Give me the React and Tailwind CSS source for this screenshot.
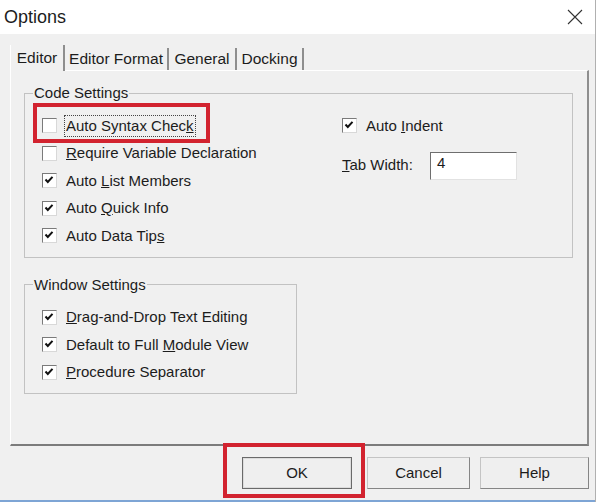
import React from 'react';

function CheckBox({ checked }) {
  return (
    <span className="relative w-[15px] h-[15px] shrink-0 bg-white border border-t-[#7a7a7a] border-l-[#7a7a7a] border-r-[#d8d8d8] border-b-[#d8d8d8]">
      {checked && (
        <svg className="absolute left-0 top-0" width="13" height="13" viewBox="0 0 13 13">
          <path d="M2.5 5.5 L4.8 8 L9.5 2.8" fill="none" stroke="#111" strokeWidth="2" />
        </svg>
      )}
    </span>
  );
}

function Row({ checked, children, focused }) {
  return (
    <div className="flex items-center h-[27.5px]">
      <CheckBox checked={checked} />
      {focused ? (
        <span className="ml-[8px] px-[1px] leading-[20px] outline-1 outline-dotted outline-[#444]">{children}</span>
      ) : (
        <span className="ml-[9px]">{children}</span>
      )}
    </div>
  );
}

function Tab({ label, width, selected }) {
  if (selected) {
    return (
      <div className={`${width} h-[26px] flex items-center justify-center border-l border-white border-r-2 border-r-[#8e8e8e] pb-[1px] bg-[#f0f0f0] relative z-10 -mb-[1px]`}>
        {label}
      </div>
    );
  }
  return (
    <div className={`${width} h-[22px] flex items-center justify-center border-r-2 border-r-[#8e8e8e]`}>
      {label}
    </div>
  );
}

export default function App() {
  return (
    <div className="relative flex w-[600px] h-[502px] overflow-hidden bg-white text-[#1c1c1c] font-['Liberation_Sans',Arial,sans-serif]">
      <div className="w-[595px] flex flex-col bg-[#f0f0f0]">
        {/* title bar */}
        <div className="h-[34px] bg-white flex items-center justify-between pl-[4px] pr-[12px]">
          <span className="text-[18px] leading-none">Options</span>
          <svg width="16" height="16" viewBox="0 0 16 16">
            <path d="M1 1 L15 15 M15 1 L1 15" stroke="#333" strokeWidth="1.1" />
          </svg>
        </div>

        {/* tabs */}
        <div className="pt-[10px] pl-[10px]">
          <div className="flex items-end h-[26px] text-[15.5px]">
            <Tab label="Editor" width="w-[55px]" selected />
            <Tab label="Editor Format" width="w-[104px]" />
            <Tab label="General" width="w-[68px]" />
            <Tab label="Docking" width="w-[67px]" />
          </div>

          <div className="w-[579px] h-[376px] border-t border-l border-white border-r-2 border-b-2 border-r-[#8e8e8e] border-b-[#7c7c7c] pt-[13px] pl-[13px] text-[15px]">
            <fieldset className="w-[549px] border border-[#c2c2c2]">
              <legend className="ml-[8px] px-[1px] leading-[18px]">Code Settings</legend>
              <div className="flex pt-[10px] pb-[7px] pl-[17px]">
                <div className="w-[300px]">
                  <Row focused>Auto Syntax Chec<u>k</u></Row>
                  <Row><u>R</u>equire Variable Declaration</Row>
                  <Row checked>Auto <u>L</u>ist Members</Row>
                  <Row checked>Auto <u>Q</u>uick Info</Row>
                  <Row checked>Auto Data Tip<u>s</u></Row>
                </div>
                <div>
                  <Row checked>Auto <u>I</u>ndent</Row>
                  <div className="flex items-center mt-[12px]">
                    <span className="w-[88px]"><u>T</u>ab Width:</span>
                    <div className="w-[87px] h-[28px] bg-white border border-t-[#6e6e6e] border-l-[#6e6e6e] border-r-[#e2e2e2] border-b-[#e2e2e2] pl-[6px] pb-[4px] flex items-center">
                      4
                    </div>
                  </div>
                </div>
              </div>
            </fieldset>

            <fieldset className="mt-[18px] w-[273px] border border-[#c2c2c2]">
              <legend className="ml-[8px] px-[1px] leading-[18px]">Window Settings</legend>
              <div className="pt-[10px] pb-[7px] pl-[17px]">
                <Row checked><u>D</u>rag-and-Drop Text Editing</Row>
                <Row checked>Default to Full <u>M</u>odule View</Row>
                <Row checked><u>P</u>rocedure Separator</Row>
              </div>
            </fieldset>
          </div>
        </div>

        {/* buttons */}
        <div className="flex justify-end mt-[11px] pr-[6px] text-[15px]">
          <button className="w-[110px] h-[32px] bg-[#efefef] border border-[#6a6a6a] shadow-[inset_0_0_0_1px_#dcdcdc]">OK</button>
          <button className="ml-[15px] w-[103px] h-[32px] bg-[#efefef] border border-[#c4c4c4] border-r-[#858585] border-b-[#858585]">Cancel</button>
          <button className="ml-[10px] w-[109px] h-[32px] bg-[#efefef] border border-[#c4c4c4] border-r-[#858585] border-b-[#858585]">Help</button>
        </div>

        <div className="flex-1" />
        <div className="h-[2px] bg-[#7ea5d5]" />
      </div>
      <div className="w-[1px] bg-[#b0b0b0]" />
      <div className="flex-1 bg-white" />

      {/* red highlight boxes */}
      <div className="absolute left-[33px] top-[103px] w-[177px] h-[40px] border-[4px] border-[#d2232f]" />
      <div className="absolute left-[223px] top-[443px] w-[142px] h-[55px] border-[4px] border-[#d2232f]" />
    </div>
  );
}
